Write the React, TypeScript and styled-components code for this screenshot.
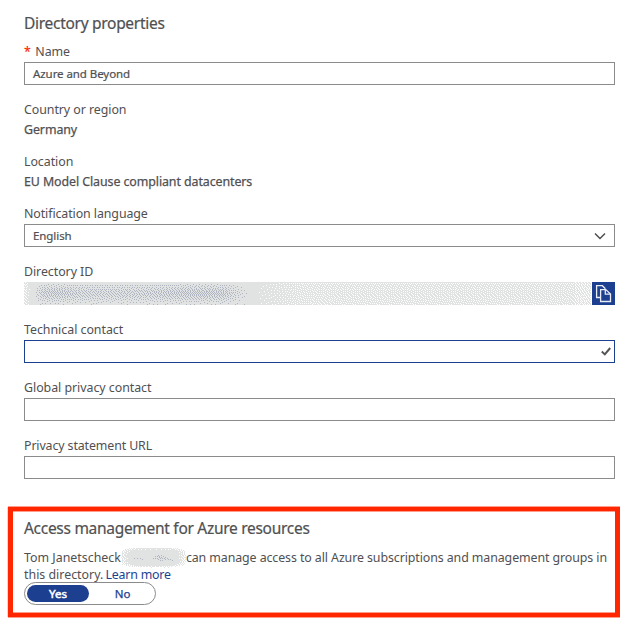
import React from "react";
import styled, { createGlobalStyle } from "styled-components";

const Global = createGlobalStyle`
  * { box-sizing: border-box; }
  body { margin: 0; background: #fff; color: #505052; font-family: "Noto Sans", "Open Sans", sans-serif; }
`;

const Page = styled.main`
  width: 629px;
  height: 631px;
  overflow: hidden;
  padding: 12px 0 0;
`;

const Form = styled.section`
  display: flex;
  flex-direction: column;
  padding: 0 14px 0 24px;
`;

const Title = styled.h2`
  margin: 0;
  font-size: 15.5px;
  font-weight: 400;
  line-height: 22px;
  white-space: nowrap;
  letter-spacing: -0.29px;
  -webkit-text-stroke: 0.2px currentColor;
`;

const Field = styled.div<{ $gap?: number }>`
  display: flex;
  flex-direction: column;
  margin-top: ${(p) => p.$gap ?? 17}px;
`;

const Label = styled.label<{ $spacing?: number }>`
  height: 18px;
  font-size: 12.4px;
  line-height: 16px;
  white-space: nowrap;
  letter-spacing: ${(p) => p.$spacing ?? -0.06}px;
`;

const Required = styled.span`
  margin-right: 4.5px;
  color: #ff2600;
  -webkit-text-stroke: 0.15px currentColor;
`;

const Value = styled.div`
  height: 17px;
  font-size: 12.4px;
  line-height: 19px;
  white-space: nowrap;
  letter-spacing: -0.08px;
  -webkit-text-stroke: 0.25px currentColor;
`;

const Box = styled.div<{ $active?: boolean }>`
  display: flex;
  align-items: center;
  justify-content: space-between;
  height: 23px;
  padding: 0 8px;
  border: 1px solid ${(p) => (p.$active ? "#1d3f8f" : "#8b8b8b")};
  font-size: 11.5px;
  line-height: 20px;
  letter-spacing: -0.07px;
  -webkit-text-stroke: 0.2px currentColor;
`;

const Chevron = styled.svg`
  width: 12px;
  height: 8px;
  fill: none;
  stroke: #4a4a4a;
  stroke-width: 1.4;
`;

const Tick = styled.svg`
  width: 10px;
  height: 9px;
  margin-right: -5px;
  fill: none;
  stroke: #555;
  stroke-width: 2;
`;

const IdRow = styled.div`
  display: flex;
  justify-content: space-between;
  height: 23px;
`;

const CopyButton = styled.button`
  display: block;
  width: 23px;
  height: 23px;
  padding: 0;
  border: 0;
  background: #1d3f8f;

  svg {
    display: block;
    fill: none;
    stroke: #e8ecf5;
    stroke-width: 1.3;
  }
`;

const Callout = styled.section`
  width: 612px;
  height: 110px;
  margin: 28px 0 0 8px;
  padding: 6px 0 0 11px;
  border: solid #ff2600;
  border-width: 4px 5px;
  box-shadow: 0 -1px #ff9d8c, 0 1px #ff9d8c, -1px 0 #ffd0c8, inset 0 1px #ff9d8c, inset 0 -1px #ff9d8c;
`;

const Description = styled.p`
  margin: 10px 0 0;
  font-size: 12.4px;
  line-height: 17px;
  white-space: nowrap;
`;

const Line = styled.span`
  display: flex;
  height: 17px;
  white-space: pre;
`;

const Statement = styled.span`
  letter-spacing: -0.09px;
`;

const Link = styled.a`
  margin-left: -1px;
  color: #1d3f8f;
  letter-spacing: -0.22px;
`;

const Masked = styled.svg`
  display: block;
  flex: none;
  overflow: visible;
`;

const Toggle = styled.div`
  display: flex;
  width: 132px;
  height: 23px;
  margin-top: -1px;
  padding: 2px;
  border: 1px solid #8b8b8b;
  border-radius: 12px;
`;

const Option = styled.span<{ $on?: boolean }>`
  flex: none;
  width: ${(p) => (p.$on ? 62 : 64)}px;
  height: 17px;
  padding-left: ${(p) => (p.$on ? 0 : 3)}px;
  border-radius: 9px;
  font-size: 11.5px;
  line-height: 17px;
  text-align: center;
  color: ${(p) => (p.$on ? "#fff" : "#1d3f8f")};
  background: ${(p) => (p.$on ? "#1d3f8f" : "transparent")};
  -webkit-text-stroke: ${(p) => (p.$on ? 0.5 : 0.25)}px currentColor;
`;

type Tone = (x: number, y: number) => number;

// Error diffusion over three tones: 0 is white, 1 is pale gray, 2 is slate.
function diffuse(width: number, height: number, tone: Tone) {
  const err = Array.from({ length: height + 1 }, () => new Array(width + 2).fill(0));
  const paths = { gray: "", slate: "" };
  for (let y = 0; y < height; y++) {
    for (let x = 0; x < width; x++) {
      const want = tone(x, y) + err[y][x + 1];
      const got = Math.max(0, Math.min(2, Math.round(want)));
      const e = want - got;
      err[y][x + 2] += (e * 7) / 16;
      err[y + 1][x] += (e * 3) / 16;
      err[y + 1][x + 1] += (e * 5) / 16;
      err[y + 1][x + 2] += e / 16;
      if (got === 1) paths.gray += `M${x} ${y}h1v1h-1z`;
      if (got === 2) paths.slate += `M${x} ${y}h1v1h-1z`;
    }
  }
  return paths;
}

const bump = (x: number, y: number, cx: number, cy: number, rx: number, ry: number) =>
  Math.exp(-(((x - cx) / rx) ** 2) - ((y - cy) / ry) ** 2);

const idTone: Tone = (x, y) => {
  if (x < 9) return Math.min(1, 0.6 + x / 16);
  if (x < 226) {
    const ends = Math.min(1, Math.max(0, (x - 7) / 12), Math.max(0, (226 - x) / 26));
    const band = Math.exp(-(((y - 11) / 8.5) ** 2));
    const peak = 0.34 + 0.14 * bump(x, y, 32, 11, 18, 9) + 0.16 * bump(x, y, 178, 12, 42, 9);
    return 1 + ends * band * peak;
  }
  if (x < 300) return 1 - Math.min(0.26, ((x - 226) / 50) * 0.26);
  return x > 550 ? 0.62 : 0.74;
};

const nameTone: Tone = (x, y) => {
  const r = ((x - 32) / 35) ** 4 + ((y - 10) / 10.5) ** 4;
  const base = Math.max(0, Math.min(1, 1.25 - r * 1.2));
  return base < 1
    ? base
    : 1 + 0.3 * bump(x, y, 16, 11, 9, 1.4) + 0.4 * bump(x, y, 38, 10, 6, 3) + 0.3 * bump(x, y, 47, 12, 6, 1.4);
};

const idDots = diffuse(567, 23, idTone);
const nameDots = diffuse(65, 22, nameTone);

function Dots({ gray, slate }: { gray: string; slate: string }) {
  return (
    <g shapeRendering="crispEdges">
      <path fill="#e1e3e3" d={gray} />
      <path fill="#b0b6c1" d={slate} />
    </g>
  );
}

export default function App() {
  return (
    <Page>
      <Global />
      <Form>
        <Title>Directory properties</Title>
        <Field $gap={10}>
          <Label><Required>*</Required>Name</Label>
          <Box>Azure and Beyond</Box>
        </Field>
        <Field>
          <Label>Country or region</Label>
          <Value>Germany</Value>
        </Field>
        <Field>
          <Label>Location</Label>
          <Value>EU Model Clause compliant datacenters</Value>
        </Field>
        <Field>
          <Label $spacing={-0.09}>Notification language</Label>
          <Box>
            English
            <Chevron viewBox="0 0 12 8"><path d="M1 1.5 6 6.5 11 1.5" /></Chevron>
          </Box>
        </Field>
        <Field>
          <Label>Directory ID</Label>
          <IdRow>
            <Masked width="567" height="23"><Dots {...idDots} /></Masked>
            <CopyButton aria-label="Copy">
              <svg width="23" height="23" viewBox="0 0 23 23">
                <path d="M8.3 15.5H4.6V3.7h5.8l3 3" />
                <path d="M8.6 7.6h5.2l4.7 4.4v7.5H8.6z" />
                <path d="M13.3 7.8v4.3h5" />
              </svg>
            </CopyButton>
          </IdRow>
        </Field>
        <Field>
          <Label $spacing={-0.03}>Technical contact</Label>
          <Box $active>
            <span />
            <Tick viewBox="0 0 10 9"><path d="M.8 4.6 3.8 7.4 9.2 1" /></Tick>
          </Box>
        </Field>
        <Field>
          <Label $spacing={-0.04}>Global privacy contact</Label>
          <Box />
        </Field>
        <Field>
          <Label $spacing={-0.12}>Privacy statement URL</Label>
          <Box />
        </Field>
      </Form>
      <Callout>
        <Title>Access management for Azure resources</Title>
        <Description>
          <Line>
            Tom Janetscheck
            <Masked width="65" height="17"><g transform="translate(0 -2)"><Dots {...nameDots} /></g></Masked>
            <Statement>can manage access to all Azure subscriptions and management groups in</Statement>
          </Line>
          <Line>this directory. <Link>Learn more</Link></Line>
        </Description>
        <Toggle>
          <Option $on>Yes</Option>
          <Option>No</Option>
        </Toggle>
      </Callout>
    </Page>
  );
}
